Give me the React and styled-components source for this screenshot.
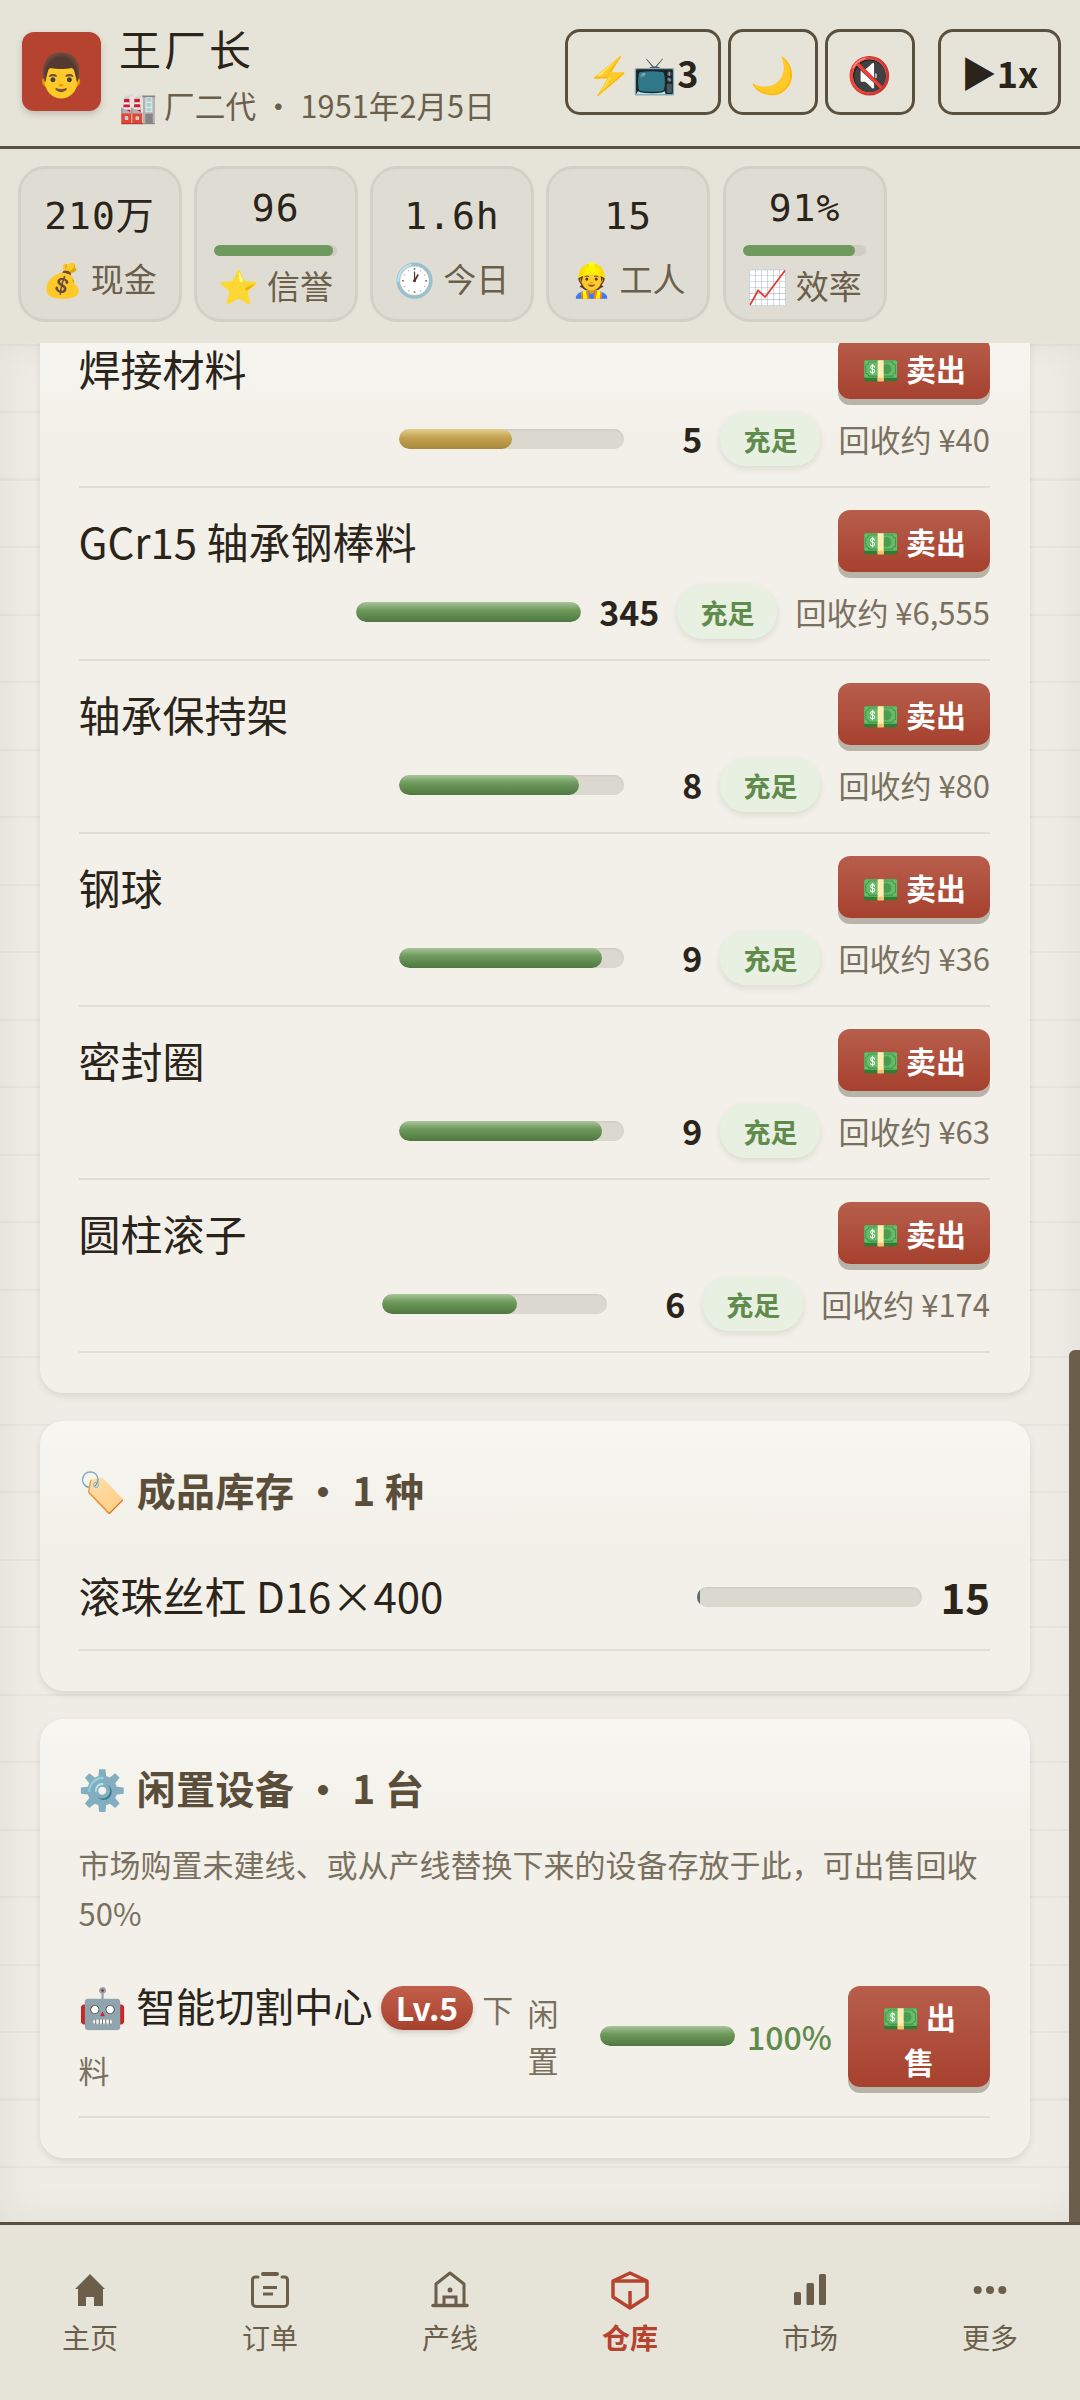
import React from 'react'
import styled, { createGlobalStyle } from 'styled-components'

const GlobalStyle = createGlobalStyle`
  html, body { margin: 0; padding: 0; background: #e6e4d9; }
  * { box-sizing: border-box; }
  body { font-family: "Noto Sans CJK SC", "Noto Sans", "Noto Color Emoji", sans-serif; color: #2a241a; }
`

const Page = styled.div`
  width: 1080px;
  height: 2400px;
  display: flex;
  flex-direction: column;
  overflow: hidden;
`

/* top bar */
const Header = styled.header`
  height: 149px;
  flex: none;
  display: flex;
  align-items: center;
  justify-content: space-between;
  padding: 0 19px 3px 22px;
  background: #e6e4d9;
  border-bottom: 3px solid #5a5040;
`
const Profile = styled.div`
  display: flex;
  align-items: center;
  gap: 18px;
`
const Avatar = styled.div`
  width: 79px;
  height: 79px;
  border-radius: 12px;
  background: #b5432f;
  box-shadow: 0 3px 6px rgba(90, 70, 50, 0.25);
  display: flex;
  align-items: center;
  justify-content: center;
  font-size: 42px;
  line-height: 1;
`
const ProfileText = styled.div`
  display: flex;
  flex-direction: column;
  gap: 8px;
  padding-top: 4px;
`
const Name = styled.div`
  font-size: 42px;
  line-height: 54px;
  letter-spacing: 3px;
`
const SubLine = styled.div`
  font-size: 30.7px;
  line-height: 44px;
  color: #6b5f4b;
  white-space: pre;
`
const Controls = styled.div`
  display: flex;
  align-items: center;
  gap: 7px;
`
const ControlButton = styled.div`
  height: 86px;
  width: ${p => p.$w}px;
  margin-left: ${p => p.$gap || 0}px;
  border: 3px solid #5a5040;
  border-radius: 15px;
  display: flex;
  align-items: center;
  justify-content: center;
  font-size: 36px;
  font-weight: 700;
  color: #2a241a;
  white-space: nowrap;
`

/* stats strip */
const StatBar = styled.div`
  height: 194px;
  flex: none;
  display: flex;
  gap: 12.25px;
  padding: 17px 17.5px 0;
  background: #e6e4d9;
`
const Stat = styled.div`
  width: 164px;
  height: 156px;
  padding-top: 5px;
  border: 3px solid #d3d0c6;
  border-radius: 27px;
  background: #dfddd3;
  display: flex;
  flex-direction: column;
  align-items: center;
  justify-content: center;
`
const StatValue = styled.div`
  font-family: "DejaVu Sans Mono", "Noto Sans CJK SC", monospace;
  font-size: 38px;
  letter-spacing: 1px;
  line-height: 52px;
`
const StatLabel = styled.div`
  font-size: 33px;
  line-height: 52px;
  color: #6b5f4b;
  white-space: pre;
  margin-top: ${p => (p.$withBar ? 3 : 10)}px;
`
const StatMeter = styled.div`
  width: 123px;
  height: 11px;
  margin-top: 11px;
  border-radius: 6px;
  background: #cfccc3;
  overflow: hidden;
`
const StatMeterFill = styled.div`
  height: 100%;
  border-radius: 6px;
  background: #6f9a5e;
`

/* scrolling content */
const Main = styled.main`
  position: relative;
  flex: 1;
  min-height: 0;
  overflow: hidden;
  padding: 0 50px 0 40px;
  background-color: #eeece5;
  background-image: repeating-linear-gradient(
    180deg,
    transparent 0,
    transparent 0.5px,
    rgba(110, 100, 80, 0.06) 0.5px,
    rgba(110, 100, 80, 0.06) 2.5px,
    transparent 2.5px,
    transparent 67.5px
  );
  box-shadow: inset 0 0 36px rgba(130, 120, 95, 0.12);
`
const ScrollContent = styled.div`
  display: flex;
  flex-direction: column;
  gap: 28px;
  margin-top: -28px;
`
const ScrollThumb = styled.div`
  position: absolute;
  top: 1007px;
  right: 0;
  bottom: 0;
  width: 11px;
  border-radius: 6px 0 0 0;
  background: #6b5f4b;
`
const Card = styled.section`
  padding: ${p => p.$top || 0}px 40px 40px 38.5px;
  border-radius: 24px;
  background: linear-gradient(180deg, #f7f6f0 0, #f2f0e9 120px);
  box-shadow: 0 3px 6px rgba(110, 100, 80, 0.16);
`
const CardTitle = styled.h2`
  margin: 0;
  display: flex;
  align-items: center;
  gap: 12px;
  font-size: 39px;
  line-height: 60px;
  font-weight: 700;
  letter-spacing: 0.4px;
  color: #5a4e3a;
  white-space: pre;
`
const Hint = styled.p`
  margin: 22px 0 0;
  font-size: 31px;
  line-height: 49px;
  color: #7a705f;
`

/* material rows */
const Row = styled.div`
  padding: 22px 0 20px;
  border-bottom: 2px solid #e0ddd4;
`
const RowTop = styled.div`
  display: flex;
  align-items: center;
  justify-content: space-between;
`
const RowBottom = styled.div`
  display: flex;
  align-items: center;
  justify-content: flex-end;
  gap: 18px;
  margin-top: 13px;
`
const ItemName = styled.div`
  font-size: 42px;
  line-height: 60px;
`
const SellButton = styled.div`
  width: 152px;
  height: 62px;
  border-radius: 12px;
  background: linear-gradient(180deg, #b85e4c, #a6412e);
  box-shadow: 0 6px 0 #b9b4aa;
  color: #fff;
  font-size: 30px;
  font-weight: 700;
  display: flex;
  align-items: center;
  justify-content: center;
  white-space: pre;
`
const Bar = styled.div`
  width: ${p => p.$w || 225}px;
  height: 20px;
  flex: none;
  border-radius: 10px;
  background: #dbd8d0;
  box-shadow: inset 0 1px 2px rgba(90, 80, 60, 0.12);
  overflow: hidden;
`
const fills = {
  ok: 'linear-gradient(180deg, #a9c49b 0, #6e9a5c 40%, #4f7840 100%)',
  warn: 'linear-gradient(180deg, #e3cf8e 0, #c2a04f 45%, #a98a3c 100%)',
  empty: '#5d6b70',
}
const BarFill = styled.div`
  height: 100%;
  border-radius: 10px;
  background: ${p => fills[p.$kind || 'ok']};
`
const Count = styled.div`
  min-width: 60px;
  text-align: right;
  font-size: 34px;
  font-weight: 700;
  line-height: 54px;
`
const Badge = styled.div`
  height: 54px;
  padding: 0 23px;
  border-radius: 26px;
  background: #e7f0e1;
  box-shadow: 0 3px 6px rgba(110, 120, 90, 0.16);
  color: #5f8b4c;
  font-size: 27px;
  font-weight: 700;
  display: flex;
  align-items: center;
`
const Price = styled.div`
  font-size: 31px;
  line-height: 54px;
  color: #7a705f;
  white-space: nowrap;
`

/* finished goods */
const GoodsRow = styled.div`
  display: flex;
  align-items: center;
  justify-content: space-between;
  margin-top: 32px;
  padding: 13.5px 0 23.5px;
  border-bottom: 2px solid #e0ddd4;
`
const GoodsRight = styled.div`
  display: flex;
  align-items: center;
  gap: 18px;
  margin-top: 4px;
`
const GoodsCount = styled.div`
  font-size: 42px;
  font-weight: 700;
  margin-top: -4px;
`

/* idle machines */
const MachineRow = styled.div`
  display: flex;
  align-items: center;
  gap: 12px;
  margin-top: 35px;
  padding-bottom: 16px;
  border-bottom: 2px solid #e0ddd4;
`
const MachineInfo = styled.div`
  width: 437px;
  flex: none;
  margin-top: 2px;
  font-size: 31px;
  line-height: 61px;
  color: #7a705f;
`
const MachineName = styled.span`
  font-size: 39.4px;
  color: #2a241a;
`
const Level = styled.span`
  display: inline-block;
  height: 44px;
  line-height: 42px;
  padding: 0 15px;
  margin: 0 9px 0 8px;
  border-radius: 22px;
  background: linear-gradient(180deg, #c25f4a, #a6412e);
  box-shadow: 0 3px 5px rgba(110, 80, 60, 0.22);
  color: #fff;
  font-size: 32px;
  font-weight: 700;
  vertical-align: 1px;
`
const MachineState = styled.div`
  width: 31px;
  flex: none;
  margin-right: 29.5px;
  font-size: 31px;
  line-height: 47px;
  color: #7a705f;
`
const Percent = styled.div`
  font-size: 32px;
  font-weight: 500;
  color: #5f8b4c;
`
const SellWideButton = styled(SellButton)`
  display: block;
  width: 142px;
  height: 101px;
  flex: none;
  margin-left: auto;
  padding: 8px 22px 0;
  text-align: center;
  line-height: 45px;
  white-space: normal;
`

/* bottom nav */
const Nav = styled.nav`
  height: 178px;
  flex: none;
  display: flex;
  padding-top: 42px;
  background: #e6e4d9;
  border-top: 3px solid #5a5040;
`
const NavItem = styled.div`
  width: 180px;
  display: flex;
  flex-direction: column;
  align-items: center;
  color: ${p => (p.$active ? '#b5432f' : '#6b5f4b')};
  font-size: 28px;
  font-weight: ${p => (p.$active ? 700 : 400)};
  line-height: 44px;
`
const NavIcon = styled.svg`
  width: 48px;
  height: 48px;
  display: block;
`

const HomeIcon = () => (
  <NavIcon viewBox="0 0 48 48" fill="currentColor">
    <path d="M24 7 39 22H37V39H28V30H20V39H12V22H9Z" />
  </NavIcon>
)
const OrdersIcon = () => (
  <NavIcon viewBox="0 0 48 48" fill="none" stroke="currentColor" strokeWidth="3" strokeLinecap="round">
    <path d="M12 10H9A3 3 0 0 0 6.5 13V36A3.5 3.5 0 0 0 10 39.5H38A3.5 3.5 0 0 0 41.5 36V13A3 3 0 0 0 39 10H36" />
    <path d="M17 7H31" strokeWidth="4" />
    <path d="M17 20.5H31M17 27H27" strokeLinecap="butt" />
  </NavIcon>
)
const LineIcon = () => (
  <NavIcon viewBox="0 0 48 48" fill="none" stroke="currentColor" strokeWidth="3">
    <path d="M10 38V17L24 6 38 17V38" strokeLinejoin="round" />
    <path d="M7 38.5H41" strokeWidth="3.5" strokeLinecap="round" />
    <path d="M18 37V30H30V37" />
    <circle cx="24" cy="23" r="2.5" fill="currentColor" stroke="none" />
  </NavIcon>
)
const WarehouseIcon = () => (
  <NavIcon viewBox="0 0 48 48" fill="none" stroke="currentColor" strokeWidth="3.5" strokeLinejoin="round">
    <path d="M24 6 41 14V30L24 41 7 30V14Z" />
    <path d="M7 14H41M24 24V40" />
  </NavIcon>
)
const MarketIcon = () => (
  <NavIcon viewBox="0 0 48 48" fill="currentColor">
    <rect x="8" y="25" width="7" height="13" rx="1.5" />
    <rect x="20.5" y="16" width="7.5" height="22" rx="1.5" />
    <rect x="33" y="7" width="7" height="31" rx="1.5" />
  </NavIcon>
)
const MoreIcon = () => (
  <NavIcon viewBox="0 0 48 48" fill="currentColor">
    <circle cx="11.7" cy="23" r="4" />
    <circle cx="24" cy="23" r="4" />
    <circle cx="36.3" cy="23" r="4" />
  </NavIcon>
)

const stats = [
  { value: '210万', label: '💰 现金' },
  { value: '96', label: '⭐ 信誉', bar: 96.5 },
  { value: '1.6h', label: '🕐 今日' },
  { value: '15', label: '👷 工人' },
  { value: '91%', label: '📈 效率', bar: 91 },
]

const materials = [
  { name: '焊接材料', pct: 50, count: 5, price: '¥40', kind: 'warn' },
  { name: 'GCr15 轴承钢棒料', pct: 100, count: 345, price: '¥6,555' },
  { name: '轴承保持架', pct: 80, count: 8, price: '¥80' },
  { name: '钢球', pct: 90, count: 9, price: '¥36' },
  { name: '密封圈', pct: 90, count: 9, price: '¥63' },
  { name: '圆柱滚子', pct: 60, count: 6, price: '¥174' },
]

const navItems = [
  { label: '主页', Icon: HomeIcon },
  { label: '订单', Icon: OrdersIcon },
  { label: '产线', Icon: LineIcon },
  { label: '仓库', Icon: WarehouseIcon, active: true },
  { label: '市场', Icon: MarketIcon },
  { label: '更多', Icon: MoreIcon },
]

export default function App() {
  return (
    <Page>
      <GlobalStyle />
      <Header>
        <Profile>
          <Avatar>👨</Avatar>
          <ProfileText>
            <Name>王厂长</Name>
            <SubLine>🏭 厂二代 · 1951年2月5日</SubLine>
          </ProfileText>
        </Profile>
        <Controls>
          <ControlButton $w={156}>⚡📺3</ControlButton>
          <ControlButton $w={90}>🌙</ControlButton>
          <ControlButton $w={90}>🔇</ControlButton>
          <ControlButton $w={123} $gap={16}>▶1x</ControlButton>
        </Controls>
      </Header>

      <StatBar>
        {stats.map(s => (
          <Stat key={s.label}>
            <StatValue>{s.value}</StatValue>
            {s.bar && (
              <StatMeter>
                <StatMeterFill style={{ width: `${s.bar}%` }} />
              </StatMeter>
            )}
            <StatLabel $withBar={!!s.bar}>{s.label}</StatLabel>
          </Stat>
        ))}
      </StatBar>

      <Main>
        <ScrollContent>
          <Card>
            {materials.map(m => (
              <Row key={m.name}>
                <RowTop>
                  <ItemName>{m.name}</ItemName>
                  <SellButton>💵 卖出</SellButton>
                </RowTop>
                <RowBottom>
                  <Bar>
                    <BarFill $kind={m.kind} style={{ width: `${m.pct}%` }} />
                  </Bar>
                  <Count>{m.count}</Count>
                  <Badge>充足</Badge>
                  <Price>回收约 {m.price}</Price>
                </RowBottom>
              </Row>
            ))}
          </Card>

          <Card $top={38}>
            <CardTitle>🏷️ 成品库存 · 1 种</CardTitle>
            <GoodsRow>
              <ItemName>滚珠丝杠 D16×400</ItemName>
              <GoodsRight>
                <Bar>
                  <BarFill $kind="empty" style={{ width: '1%' }} />
                </Bar>
                <GoodsCount>15</GoodsCount>
              </GoodsRight>
            </GoodsRow>
          </Card>

          <Card $top={38}>
            <CardTitle>⚙️ 闲置设备 · 1 台</CardTitle>
            <Hint>市场购置未建线、或从产线替换下来的设备存放于此，可出售回收50%</Hint>
            <MachineRow>
              <MachineInfo>
                <MachineName>🤖 智能切割中心</MachineName>
                <Level>Lv.5</Level>
                下料
              </MachineInfo>
              <MachineState>闲置</MachineState>
              <Bar $w={135}>
                <BarFill style={{ width: '100%' }} />
              </Bar>
              <Percent>100%</Percent>
              <SellWideButton>💵 出售</SellWideButton>
            </MachineRow>
          </Card>
        </ScrollContent>
        <ScrollThumb />
      </Main>

      <Nav>
        {navItems.map(({ label, Icon, active }) => (
          <NavItem key={label} $active={active}>
            <Icon />
            {label}
          </NavItem>
        ))}
      </Nav>
    </Page>
  )
}
